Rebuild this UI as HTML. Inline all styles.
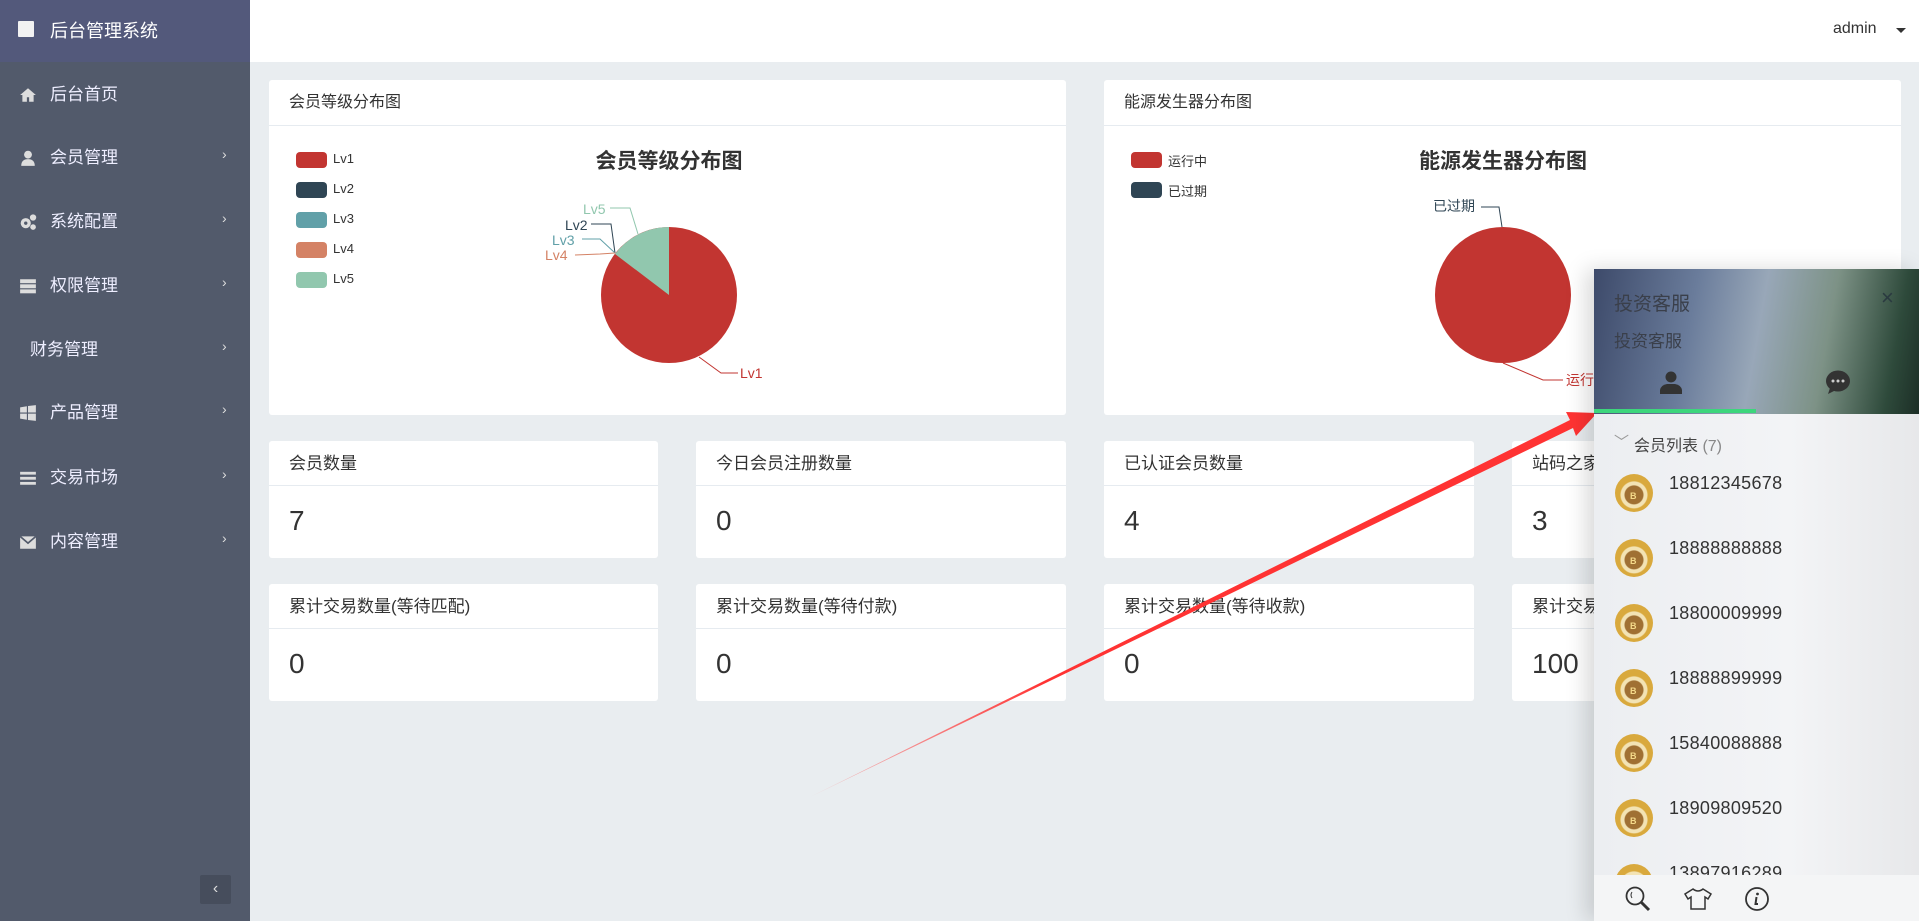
<!DOCTYPE html>
<html><head><meta charset="utf-8"><style>
*{margin:0;padding:0;box-sizing:border-box}
body{width:1919px;height:921px;overflow:hidden;background:#e9edf0;font-family:"Liberation Sans","Noto Sans CJK SC",sans-serif;color:#333;position:relative}
.abs{position:absolute}
#side{left:0;top:0;width:250px;height:921px;background:#525a6b}
#logo{left:0;top:0;width:250px;height:62px;background:#53597b;color:#fff;font-size:18px}
.nav{position:absolute;left:0;width:250px;color:#eef;font-size:17px;height:30px;line-height:30px}
.nav .ic{position:absolute;left:19px;top:6px;width:18px;height:18px}
.nav .t{position:absolute;left:50px}
.nav .ar{position:absolute;left:222px;top:-4px;font-size:14px;color:#ddd}
#top{left:250px;top:0;width:1669px;height:62px;background:#fff}
.card{position:absolute;background:#fff;border-radius:3px}
.card .h{height:46px;border-bottom:1px solid #e6ebf0;font-size:16px;padding:0 20px;line-height:46px;color:#333;white-space:nowrap}
.stat .h{height:45px;font-size:17px;line-height:45px}
.stat .v{font-size:28px;padding:0 20px;line-height:70px;color:#333}
.leg{position:absolute;font-size:13px;color:#333;white-space:nowrap}
.leg i{position:absolute;left:0;width:31px;height:16px;border-radius:4px}
.leg span{position:absolute;left:37px;top:-1px}
#chat{left:1594px;top:269px;width:325px;height:652px;background:linear-gradient(90deg,#eceef1,#f3f4f6 60%,#e7e8ea);overflow:hidden}
#chead{left:0;top:0;width:325px;height:145px;background:linear-gradient(100deg,#3d4a6a 0%,#6a7c9b 30%,#98a7b8 50%,#7d9286 70%,#2e4a3b 90%,#1c2e26 100%)}
.it{position:absolute;left:21px;height:40px;width:300px}
.av{position:absolute;left:0;top:0;width:38px;height:38px;border-radius:50%;background:radial-gradient(circle at 50% 55%,#a07033 0 9px,#f3e3b4 10px 13px,#d9a93d 14px 19px)}
.av b{position:absolute;left:15px;top:17px;font-size:9px;color:#f5d98a}
.it span{position:absolute;left:54px;top:-1px;font-size:18px;color:#333;letter-spacing:.3px}
</style></head><body>
<div id="side" class="abs"></div>
<div id="logo" class="abs"><div class="abs" style="left:18px;top:21px;width:16px;height:16px;background:#f2f2f2;border-radius:1px"></div><div class="abs" style="left:50px;top:17px">后台管理系统</div></div>
<div class="nav" style="top:80px"><svg class="ic" viewBox="0 0 16 16"><path d="M8 2 L1 8 L3 8 L3 14 L7 14 L7 10 L9 10 L9 14 L13 14 L13 8 L15 8Z" fill="#ddd"/></svg><span class="t">后台首页</span></div>
<div class="nav" style="top:143px"><svg class="ic" viewBox="0 0 16 16"><circle cx="8" cy="5" r="3.5" fill="#ddd"/><path d="M2 15 Q2 9 8 9 Q14 9 14 15Z" fill="#ddd"/></svg><span class="t">会员管理</span><span class="ar">›</span></div>
<div class="nav" style="top:207px"><svg class="ic" viewBox="0 0 16 16"><circle cx="6" cy="9" r="4.5" fill="#ddd"/><circle cx="6" cy="9" r="1.5" fill="#525a6b"/><circle cx="12.5" cy="4" r="2.8" fill="#ddd"/><circle cx="12.5" cy="12.5" r="2.5" fill="#ddd"/></svg><span class="t">系统配置</span><span class="ar">›</span></div>
<div class="nav" style="top:271px"><svg class="ic" viewBox="0 0 16 16"><rect x="1" y="2" width="14" height="3.5" fill="#ddd"/><rect x="1" y="6.5" width="14" height="3.5" fill="#ddd"/><rect x="1" y="11" width="14" height="3.5" fill="#ddd"/></svg><span class="t">权限管理</span><span class="ar">›</span></div>
<div class="nav" style="top:335px"><span class="t" style="left:30px">财务管理</span><span class="ar">›</span></div>
<div class="nav" style="top:398px"><svg class="ic" viewBox="0 0 16 16"><path d="M1 3 L7 2 L7 7.5 L1 7.5Z M8 1.8 L15 1 L15 7.5 L8 7.5Z M1 8.5 L7 8.5 L7 14 L1 13Z M8 8.5 L15 8.5 L15 15 L8 14.2Z" fill="#ddd"/></svg><span class="t">产品管理</span><span class="ar">›</span></div>
<div class="nav" style="top:463px"><svg class="ic" viewBox="0 0 16 16"><rect x="1" y="2.5" width="14" height="2.5" fill="#ddd"/><rect x="1" y="7" width="14" height="2.5" fill="#ddd"/><rect x="1" y="11.5" width="14" height="2.5" fill="#ddd"/></svg><span class="t">交易市场</span><span class="ar">›</span></div>
<div class="nav" style="top:527px"><svg class="ic" viewBox="0 0 16 16"><rect x="1" y="3" width="14" height="11" fill="#ddd"/><path d="M1 3 L8 9 L15 3" stroke="#525a6b" stroke-width="1.5" fill="none"/></svg><span class="t">内容管理</span><span class="ar">›</span></div>
<div class="abs" style="left:200px;top:875px;width:31px;height:29px;background:#464d5c;border-radius:2px;color:#ddd;text-align:center;line-height:27px;font-size:16px">‹</div>

<div id="top" class="abs"><div class="abs" style="left:1583px;top:20px;font-size:16px;color:#333">admin</div><div class="abs" style="left:1646px;top:28px;border-left:5px solid transparent;border-right:5px solid transparent;border-top:5px solid #333"></div></div>

<div class="card" style="left:269px;top:80px;width:797px;height:335px"><div class="h">会员等级分布图</div>
<div class="leg" style="left:27px;top:72px"><i style="background:#c23531"></i><span>Lv1</span></div>
<div class="leg" style="left:27px;top:102px"><i style="background:#2f4554"></i><span>Lv2</span></div>
<div class="leg" style="left:27px;top:132px"><i style="background:#61a0a8"></i><span>Lv3</span></div>
<div class="leg" style="left:27px;top:162px"><i style="background:#d48265"></i><span>Lv4</span></div>
<div class="leg" style="left:27px;top:192px"><i style="background:#91c7ae"></i><span>Lv5</span></div>
</div>
<div class="card" style="left:1104px;top:80px;width:797px;height:335px"><div class="h">能源发生器分布图</div>
<div class="leg" style="left:27px;top:72px"><i style="background:#c23531"></i><span>运行中</span></div>
<div class="leg" style="left:27px;top:102px"><i style="background:#2f4554"></i><span>已过期</span></div>
</div>

<svg class="abs" style="left:0;top:0" width="1919" height="921" font-family="Liberation Sans, Noto Sans CJK SC, sans-serif">
<text x="669" y="168" font-size="21" font-weight="bold" text-anchor="middle" fill="#333">会员等级分布图</text>
<circle cx="669" cy="295" r="68" fill="#c23531"/>
<path d="M669 295 L669 227 A68 68 0 0 0 615 254 Z" fill="#91c7ae"/>
<path d="M610 208 L630 208 L638 234" stroke="#91c7ae" fill="none"/>
<path d="M591 224 L611 224 L615 253" stroke="#2f4554" fill="none"/>
<path d="M582 239 L600 239 L615 253" stroke="#61a0a8" fill="none"/>
<path d="M575 255 L600 254 L615 253" stroke="#d48265" fill="none"/>
<path d="M699 357 L721 373 L738 373" stroke="#c23531" fill="none"/>
<text x="583" y="214" font-size="14" fill="#91c7ae">Lv5</text>
<text x="565" y="230" font-size="14" fill="#2f4554">Lv2</text>
<text x="552" y="245" font-size="14" fill="#61a0a8">Lv3</text>
<text x="545" y="260" font-size="14" fill="#d48265">Lv4</text>
<text x="740" y="378" font-size="14" fill="#c23531">Lv1</text>
<text x="1503" y="168" font-size="21" font-weight="bold" text-anchor="middle" fill="#333">能源发生器分布图</text>
<circle cx="1503" cy="295" r="68" fill="#c23531"/>
<path d="M1481 207 L1499 207 L1502 227" stroke="#2f4554" fill="none"/>
<path d="M1503 363 L1543 380 L1563 380" stroke="#c23531" fill="none"/>
<text x="1433" y="211" font-size="14" fill="#2f4554">已过期</text>
<text x="1566" y="385" font-size="14" fill="#c23531">运行中</text>
</svg>

<div class="card stat" style="left:269px;top:441px;width:389px;height:117px"><div class="h">会员数量</div><div class="v">7</div></div>
<div class="card stat" style="left:696px;top:441px;width:370px;height:117px"><div class="h">今日会员注册数量</div><div class="v">0</div></div>
<div class="card stat" style="left:1104px;top:441px;width:370px;height:117px"><div class="h">已认证会员数量</div><div class="v">4</div></div>
<div class="card stat" style="left:1512px;top:441px;width:389px;height:117px"><div class="h">站码之家</div><div class="v">3</div></div>
<div class="card stat" style="left:269px;top:584px;width:389px;height:117px"><div class="h">累计交易数量(等待匹配)</div><div class="v">0</div></div>
<div class="card stat" style="left:696px;top:584px;width:370px;height:117px"><div class="h">累计交易数量(等待付款)</div><div class="v">0</div></div>
<div class="card stat" style="left:1104px;top:584px;width:370px;height:117px"><div class="h">累计交易数量(等待收款)</div><div class="v">0</div></div>
<div class="card stat" style="left:1512px;top:584px;width:389px;height:117px"><div class="h">累计交易</div><div class="v">100</div></div>

<svg class="abs" style="left:0;top:0" width="1919" height="921"><defs><linearGradient id="ag" x1="810" y1="797" x2="1591" y2="414" gradientUnits="userSpaceOnUse"><stop offset="0" stop-color="#ff4040" stop-opacity=".2"/><stop offset=".3" stop-color="#f33"/></linearGradient></defs>
<polygon points="810,797 1570,420 1566,412 1597,413 1576,436 1573,428" fill="url(#ag)"/></svg>

<div id="chat" class="abs" style="box-shadow:-8px 0 20px rgba(0,0,0,.15)">
<div id="chead" class="abs">
<div class="abs" style="left:20px;top:20px;font-size:19px;color:#3a3f4a">投资客服</div>
<div class="abs" style="left:20px;top:58px;font-size:17px;color:#3a3f4a">投资客服</div>
<div class="abs" style="left:287px;top:16px;font-size:22px;color:#2a3a40">×</div>
<svg class="abs" style="left:64px;top:100px" width="26" height="26" viewBox="0 0 26 26"><circle cx="13" cy="8" r="5.5" fill="#333"/><path d="M2 25 L2 21 Q3 16 9 15 L17 15 Q23 16 24 21 L24 25Z" fill="#333"/></svg>
<svg class="abs" style="left:231px;top:101px" width="26" height="25" viewBox="0 0 26 25"><ellipse cx="13" cy="11" rx="12" ry="10.5" fill="#333"/><path d="M5 18 L3 24 L11 20Z" fill="#333"/><circle cx="8" cy="11" r="1.5" fill="#ccc"/><circle cx="13" cy="11" r="1.5" fill="#ccc"/><circle cx="18" cy="11" r="1.5" fill="#ccc"/></svg>
<div class="abs" style="left:0;top:140px;width:162px;height:4px;background:#3dd67c"></div>
</div>
<div class="abs" style="left:20px;top:162px;font-size:15px;color:#999">﹀</div>
<div class="abs" style="left:40px;top:163px;font-size:16px;color:#444">会员列表 <span style="color:#888">(7)</span></div>
<div class="it" style="top:205px"><div class="av"><b>B</b></div><span>18812345678</span></div>
<div class="it" style="top:270px"><div class="av"><b>B</b></div><span>18888888888</span></div>
<div class="it" style="top:335px"><div class="av"><b>B</b></div><span>18800009999</span></div>
<div class="it" style="top:400px"><div class="av"><b>B</b></div><span>18888899999</span></div>
<div class="it" style="top:465px"><div class="av"><b>B</b></div><span>15840088888</span></div>
<div class="it" style="top:530px"><div class="av"><b>B</b></div><span>18909809520</span></div>
<div class="it" style="top:595px"><div class="av"><b>B</b></div><span>13897916289</span></div>
<div class="abs" style="left:0;top:606px;width:325px;height:46px;background:#f4f5f6">
<svg class="abs" style="left:30px;top:10px" width="28" height="28" viewBox="0 0 28 28"><circle cx="11" cy="11" r="8.5" fill="none" stroke="#333" stroke-width="1.8"/><path d="M17 17 L25 25" stroke="#333" stroke-width="3"/><path d="M8 7 Q6 10 8 13" stroke="#333" fill="none"/></svg>
<svg class="abs" style="left:89px;top:12px" width="30" height="24" viewBox="0 0 30 24"><path d="M10 2 Q15 6 20 2 L28 7 L25 12 L22 10 L22 22 L8 22 L8 10 L5 12 L2 7Z" fill="none" stroke="#333" stroke-width="1.5"/></svg>
<svg class="abs" style="left:150px;top:11px" width="26" height="26" viewBox="0 0 26 26"><circle cx="13" cy="13" r="11" fill="none" stroke="#333" stroke-width="1.8"/><circle cx="13.5" cy="8" r="1.4" fill="#333"/><path d="M12.5 11 L11.5 18 L14 18" stroke="#333" stroke-width="2" fill="none"/></svg>
</div>
</div>
</body></html>
